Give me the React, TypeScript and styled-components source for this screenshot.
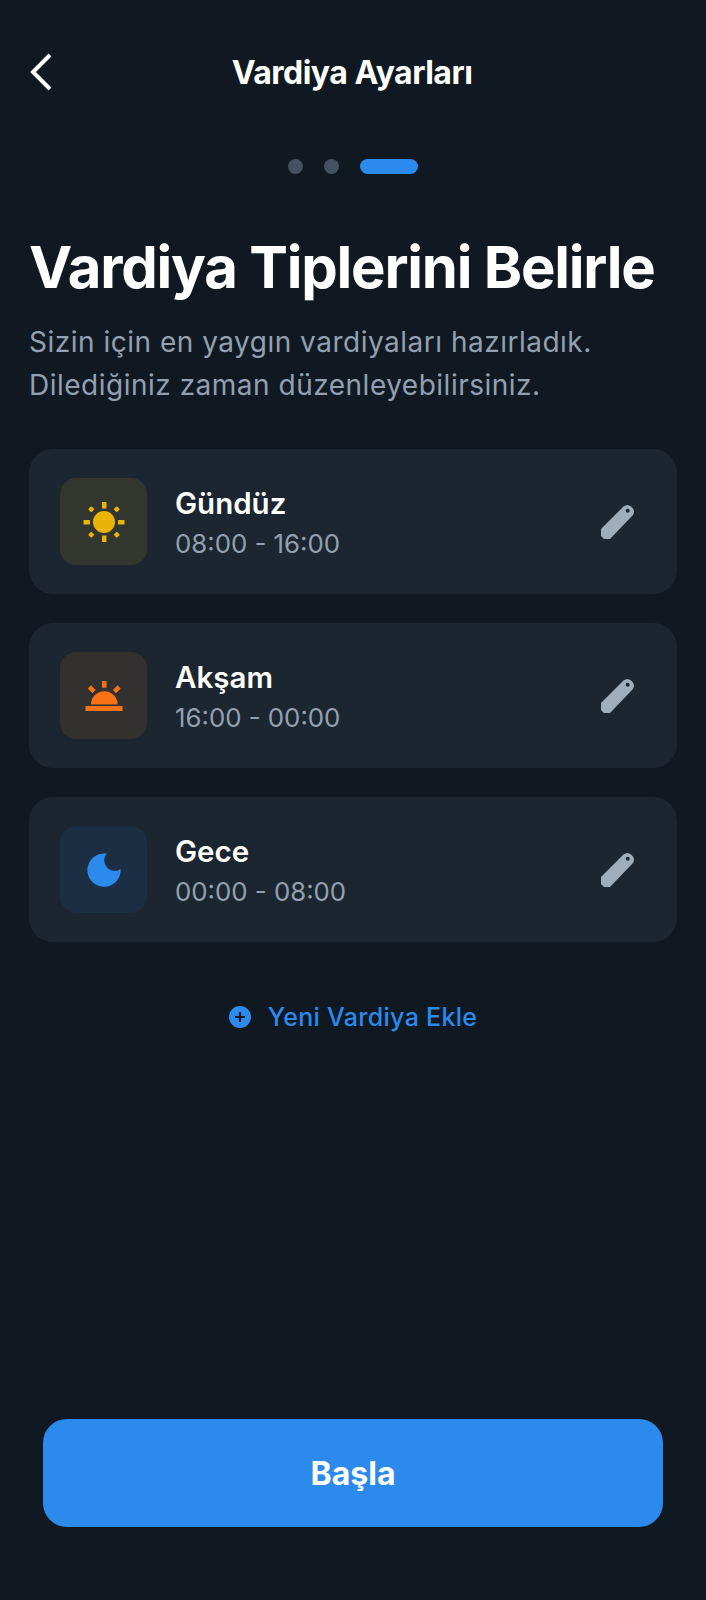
import React from 'react';
import styled, { createGlobalStyle } from 'styled-components';

const GlobalStyle = createGlobalStyle`
  html, body {
    margin: 0;
    padding: 0;
    background: #101922;
  }
`;

const Screen = styled.div`
  width: 706px;
  height: 1600px;
  box-sizing: border-box;
  display: flex;
  flex-direction: column;
  background: #101922;
  font-family: Inter, "Liberation Sans", sans-serif;
  color: #fff;
`;

const Header = styled.header`
  display: flex;
  align-items: center;
  height: 58px;
  margin-top: 43px;
  padding: 0 29px;
`;

const BackButton = styled.button`
  display: flex;
  width: 24px;
  height: 40px;
  padding: 0;
  border: none;
  background: none;
`;

const HeaderTitle = styled.h1`
  flex: 1;
  margin: 0 26px 0 0;
  font-size: 32px;
  font-weight: 700;
  letter-spacing: -0.5px;
  text-align: center;
`;

const Stepper = styled.div`
  display: flex;
  justify-content: center;
  align-items: center;
  gap: 21px;
  margin-top: 58px;
`;

const Step = styled.span<{ $active?: boolean }>`
  width: ${props => (props.$active ? '58px' : '15px')};
  height: 15px;
  border-radius: 8px;
  background: ${props => (props.$active ? '#2b8aec' : '#455161')};
`;

const Content = styled.main`
  display: flex;
  flex-direction: column;
  padding: 0 29px;
`;

const Title = styled.h2`
  margin: 58px 0 0;
  font-size: 58px;
  line-height: 70px;
  font-weight: 700;
  letter-spacing: -1.2px;
  white-space: nowrap;
`;

const Subtitle = styled.p`
  margin: 19px 0 0;
  font-size: 28px;
  line-height: 43px;
  letter-spacing: 0.5px;
  color: #92a0b1;
`;

const ShiftList = styled.div`
  display: flex;
  flex-direction: column;
  gap: 29px;
  margin-top: 42px;
`;

const ShiftCard = styled.div`
  display: flex;
  align-items: center;
  height: 145px;
  box-sizing: border-box;
  padding: 0 29px 0 31px;
  border-radius: 24px;
  background: #1c2630;
`;

const IconBox = styled.div<{ $bg: string }>`
  display: flex;
  align-items: center;
  justify-content: center;
  width: 87px;
  height: 87px;
  border-radius: 16px;
  background: ${props => props.$bg};
`;

const ShiftText = styled.div`
  flex: 1;
  display: flex;
  flex-direction: column;
  margin-left: 28px;
  padding-top: 3px;
`;

const ShiftName = styled.div`
  font-size: 29.5px;
  line-height: 36px;
  font-weight: 600;
`;

const ShiftHours = styled.div`
  margin-top: 5px;
  font-size: 25.8px;
  line-height: 36px;
  color: #92a0b1;
`;

const EditButton = styled.button`
  display: flex;
  padding: 0;
  margin-right: 13px;
  border: none;
  background: none;
`;

const AddRow = styled.button`
  display: flex;
  align-items: center;
  justify-content: center;
  gap: 17px;
  margin-top: 55px;
  padding: 0;
  border: none;
  background: none;
  font-family: inherit;
  font-size: 25px;
  line-height: 40px;
  font-weight: 500;
  letter-spacing: 0.3px;
  color: #2b8aec;
`;

const Footer = styled.footer`
  margin-top: auto;
  padding: 0 43px 73px;
`;

const StartButton = styled.button`
  width: 100%;
  height: 108px;
  border: none;
  border-radius: 24px;
  background: #2b8aec;
  font-family: inherit;
  font-size: 32px;
  font-weight: 700;
  color: #fff;
`;

const SunIcon = () => (
  <svg width="44" height="44" viewBox="0 0 44 44" fill="#eab308">
    <circle cx="22" cy="22" r="11" />
    <rect x="20" y="2" width="4.500" height="6.500" />
    <rect x="20" y="35.500" width="4.500" height="6.500" />
    <rect x="1.500" y="20" width="6.500" height="4.500" />
    <rect x="36" y="20" width="6.500" height="4.500" />
    <rect x="7" y="7" width="4.500" height="4.500" rx="1" transform="rotate(45 9.250 9.250)" />
    <rect x="32.500" y="7" width="4.500" height="4.500" rx="1" transform="rotate(45 34.750 9.250)" />
    <rect x="7" y="32.500" width="4.500" height="4.500" rx="1" transform="rotate(45 9.250 34.750)" />
    <rect x="32.500" y="32.500" width="4.500" height="4.500" rx="1" transform="rotate(45 34.750 34.750)" />
  </svg>
);

const SunsetIcon = () => (
  <svg width="44" height="44" viewBox="0 0 44 44" fill="#f97316">
    <path d="M9 30.500a13.300 13.300 0 0 1 26.600 0z" />
    <rect x="3.500" y="32" width="37" height="5" />
    <rect x="20" y="7" width="4.500" height="6.700" />
    <rect x="7.500" y="12" width="4.500" height="6.500" transform="rotate(-45 9.750 15.250)" />
    <rect x="32.500" y="12" width="4.500" height="6.500" transform="rotate(45 34.750 15.250)" />
  </svg>
);

const MoonIcon = () => (
  <svg width="44" height="44" viewBox="0 0 44 44">
    <path
      d="M24.700 5.600A16.700 16.700 0 1 0 38.700 21A10.500 10.500 0 0 1 24.700 5.600z"
      fill="#2b8aec"
    />
  </svg>
);

const PencilIcon = () => (
  <svg width="36" height="36" viewBox="0 0 36 36">
    <path
      d="M24.500 2.500Q28.500 -0.500 32 2.500L33.500 4Q36.500 7.500 33.500 11.500L11 35H5L2 32V25z"
      fill="#a0adbb"
    />
    <circle cx="28.700" cy="6.700" r="2" fill="#1c2630" />
  </svg>
);

const PlusCircleIcon = () => (
  <svg width="22" height="22" viewBox="0 0 22 22">
    <circle cx="11" cy="11" r="11" fill="#2b8aec" />
    <path d="M11 6v10M6 11h10" stroke="#101922" strokeWidth="2.200" />
  </svg>
);

const shifts = [
  { name: 'Gündüz', hours: '08:00 - 16:00', bg: '#33362f', icon: <SunIcon /> },
  { name: 'Akşam', hours: '16:00 - 00:00', bg: '#33312f', icon: <SunsetIcon /> },
  { name: 'Gece', hours: '00:00 - 08:00', bg: '#1c2e43', icon: <MoonIcon /> },
];

const App = () => (
  <Screen>
    <GlobalStyle />
    <Header>
      <BackButton aria-label="Geri">
        <svg width="24" height="40" viewBox="0 0 24 40" fill="none">
          <path d="M21 3L4 20l17 17" stroke="#fff" strokeWidth="4" />
        </svg>
      </BackButton>
      <HeaderTitle>Vardiya Ayarları</HeaderTitle>
    </Header>
    <Stepper>
      <Step />
      <Step />
      <Step $active />
    </Stepper>
    <Content>
      <Title>Vardiya Tiplerini Belirle</Title>
      <Subtitle>
        Sizin için en yaygın vardiyaları hazırladık.
        <br />
        Dilediğiniz zaman düzenleyebilirsiniz.
      </Subtitle>
      <ShiftList>
        {shifts.map(shift => (
          <ShiftCard key={shift.name}>
            <IconBox $bg={shift.bg}>{shift.icon}</IconBox>
            <ShiftText>
              <ShiftName>{shift.name}</ShiftName>
              <ShiftHours>{shift.hours}</ShiftHours>
            </ShiftText>
            <EditButton aria-label="Düzenle">
              <PencilIcon />
            </EditButton>
          </ShiftCard>
        ))}
      </ShiftList>
      <AddRow>
        <PlusCircleIcon />
        Yeni Vardiya Ekle
      </AddRow>
    </Content>
    <Footer>
      <StartButton>Başla</StartButton>
    </Footer>
  </Screen>
);

export default App;
